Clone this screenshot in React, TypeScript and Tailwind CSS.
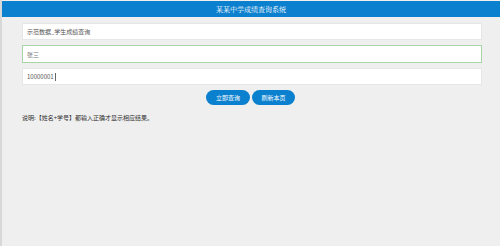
import React from 'react';

const FONT = "font-['Microsoft_YaHei','Noto_Sans_CJK_SC',sans-serif]";

export default function App() {
  return (
    <div className={`w-[500px] h-[246px] bg-[#efefef] border-l-2 border-[#d8d8d8] ${FONT} overflow-hidden`}>
      <div className="mt-px h-[16px] bg-[#0b80cf] flex items-center justify-center text-white text-[7px] leading-none font-['Noto_Serif_CJK_SC','Noto_Sans_CJK_SC',serif]">
        某某中学成绩查询系统
      </div>
      <div className="pl-[20px] pr-[18px] pt-[6px] flex flex-col gap-[5px]">
        <div className="h-[17px] bg-white border border-[#e6e6e6] flex items-center pl-[4px] text-[6px] text-[#555]">
          示范数据_学生成绩查询
        </div>
        <div className="h-[18px] bg-white border border-[#a8d5a6] flex items-center pl-[4px] text-[6px] text-[#777]">
          张三
        </div>
        <div className="h-[17px] bg-white border border-[#e6e6e6] flex items-center pl-[4px] text-[6px] text-[#555]">
          10000001
          <span className="ml-px w-px h-[8px] bg-[#666]"></span>
        </div>
        <div className="flex justify-center gap-[2px] pr-[3px]">
          <button className="w-[44px] h-[15px] rounded-full bg-[#0b80cf] text-white text-[6px] leading-none">立即查询</button>
          <button className="w-[43px] h-[15px] rounded-full bg-[#0b80cf] text-white text-[6px] leading-none">刷新本页</button>
        </div>
        <div className="pt-[3px] text-[6px] text-[#333]">说明:【姓名+学号】都输入正确才显示相应结果。</div>
      </div>
    </div>
  );
}
